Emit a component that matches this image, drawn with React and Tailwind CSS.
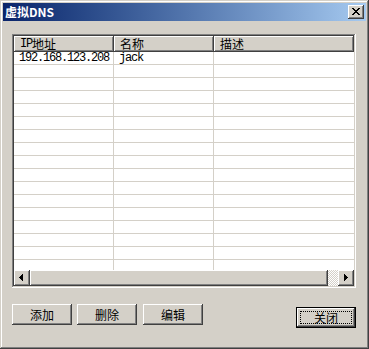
const raised =
  'shadow-[inset_-1px_-1px_#404040,inset_1px_1px_#ffffff,inset_-2px_-2px_#808080,inset_2px_2px_#d4d0c8]';

const cjk = "font-['Noto_Sans_CJK_SC',sans-serif]";
const mono = "font-['Liberation_Mono','Noto_Sans_CJK_SC',monospace] tracking-[-1.2px]";

const columns = [
  { w: 'w-[100px]', label: (<><span className={mono}>IP</span>地址</>) },
  { w: 'w-[100px]', label: '名称' },
  { w: 'w-[140px]', label: '描述' },
];

const rows = [['192.168.123.208', 'jack', '']];
while (rows.length < 17) rows.push(['', '', '']);

function CloseGlyph() {
  const px = [
    [0, 0], [1, 0], [6, 0], [7, 0],
    [1, 1], [2, 1], [5, 1], [6, 1],
    [2, 2], [3, 2], [4, 2], [5, 2],
    [3, 3], [4, 3],
    [2, 4], [3, 4], [4, 4], [5, 4],
    [1, 5], [2, 5], [5, 5], [6, 5],
    [0, 6], [1, 6], [6, 6], [7, 6],
  ];
  return (
    <svg width="8" height="7" viewBox="0 0 8 7" shapeRendering="crispEdges">
      {px.map(([x, y]) => (
        <rect key={`${x}-${y}`} x={x} y={y} width="1" height="1" fill="#000" />
      ))}
    </svg>
  );
}

function Arrow({ dir }) {
  // 4 x 7 pixel triangle
  const cols = [[3, 1], [2, 3], [1, 5], [0, 7]];
  return (
    <svg width="4" height="7" viewBox="0 0 4 7" shapeRendering="crispEdges">
      {cols.map(([y, h], i) => (
        <rect key={i} x={dir === 'left' ? i : 3 - i} y={y} width="1" height={h} fill="#000" />
      ))}
    </svg>
  );
}

function Button({ children, className = '' }) {
  return (
    <button
      className={`flex h-[21px] w-[60px] items-center justify-center bg-[#d4d0c8] text-[12px] leading-[12px] text-black ${cjk} ${raised} ${className}`}
    >
      {children}
    </button>
  );
}

export default function App() {
  return (
    <div className="flex h-[349px] w-[369px] flex-col bg-[#d4d0c8] p-[3px] shadow-[inset_-1px_-1px_#404040,inset_1px_1px_#d4d0c8,inset_-2px_-2px_#808080,inset_2px_2px_#ffffff]">
      {/* title bar */}
      <div className="flex h-[18px] items-center justify-between bg-linear-to-r from-[#0a246a] to-[#a6caf0] pl-[2px] pr-[2px]">
        <span className={`text-[12px] font-bold leading-[12px] text-white ${cjk}`}>虚拟DNS</span>
        <div className={`flex h-[14px] w-[16px] items-start bg-[#d4d0c8] pl-[4px] pt-[3px] ${raised}`}>
          <CloseGlyph />
        </div>
      </div>

      {/* client area */}
      <div className="flex flex-1 flex-col pl-[9px]">
        {/* list view */}
        <div className="mt-[13px] flex h-[254px] w-[344px] flex-col bg-white p-[2px] shadow-[inset_-1px_-1px_#ffffff,inset_1px_1px_#808080,inset_-2px_-2px_#d4d0c8,inset_2px_2px_#404040]">
          <div className="flex h-[16px]">
            {columns.map((c, i) => (
              <div
                key={i}
                className={`${c.w} flex h-[16px] items-center bg-[#d4d0c8] pl-[6px] text-[12px] leading-[12px] text-black ${cjk} shadow-[inset_-1px_-1px_#404040,inset_1px_1px_#ffffff,inset_-2px_-2px_#808080]`}
              >
                {c.label}
              </div>
            ))}
          </div>

          <div className="h-[218px] overflow-hidden">
            {rows.map((r, i) => (
              <div key={i} className="flex h-[13px] border-b border-[#d4d0c8]">
                <div className={`w-[100px] border-r border-[#d4d0c8] pl-[5px] text-[12px] leading-[12px] text-black ${mono}`}>
                  {r[0]}
                </div>
                <div className={`w-[100px] border-r border-[#d4d0c8] pl-[5px] text-[12px] leading-[12px] text-black ${mono}`}>
                  {r[1]}
                </div>
                <div className="w-[140px]">{r[2]}</div>
              </div>
            ))}
          </div>

          {/* horizontal scrollbar */}
          <div className="flex h-[16px]">
            <div className={`flex h-[16px] w-[16px] items-start bg-[#d4d0c8] pl-[5px] pt-[4px] ${raised}`}>
              <Arrow dir="left" />
            </div>
            <div className={`h-[16px] w-[298px] bg-[#d4d0c8] ${raised}`} />
            <div className="h-[16px] w-[10px] bg-[image:repeating-conic-gradient(#d4d0c8_0%_25%,#ffffff_0%_50%)] bg-[length:2px_2px]" />
            <div className={`flex h-[16px] w-[16px] items-start bg-[#d4d0c8] pl-[6px] pt-[4px] ${raised}`}>
              <Arrow dir="right" />
            </div>
          </div>
        </div>

        {/* buttons */}
        <div className="mt-[16px] flex items-start">
          <Button>添加</Button>
          <Button className="ml-[5px]">删除</Button>
          <Button className="ml-[6px]">编辑</Button>
          <div className="relative ml-[93px] mt-[3px] h-[21px] w-[60px] border border-black">
            <button
              className={`flex h-[19px] w-[58px] items-center justify-center bg-[#d4d0c8] text-[12px] leading-[12px] text-black ${cjk} ${raised}`}
            >
              关闭
            </button>
            <div className="absolute inset-[3px] border border-dotted border-black" />
          </div>
        </div>
      </div>
    </div>
  );
}
